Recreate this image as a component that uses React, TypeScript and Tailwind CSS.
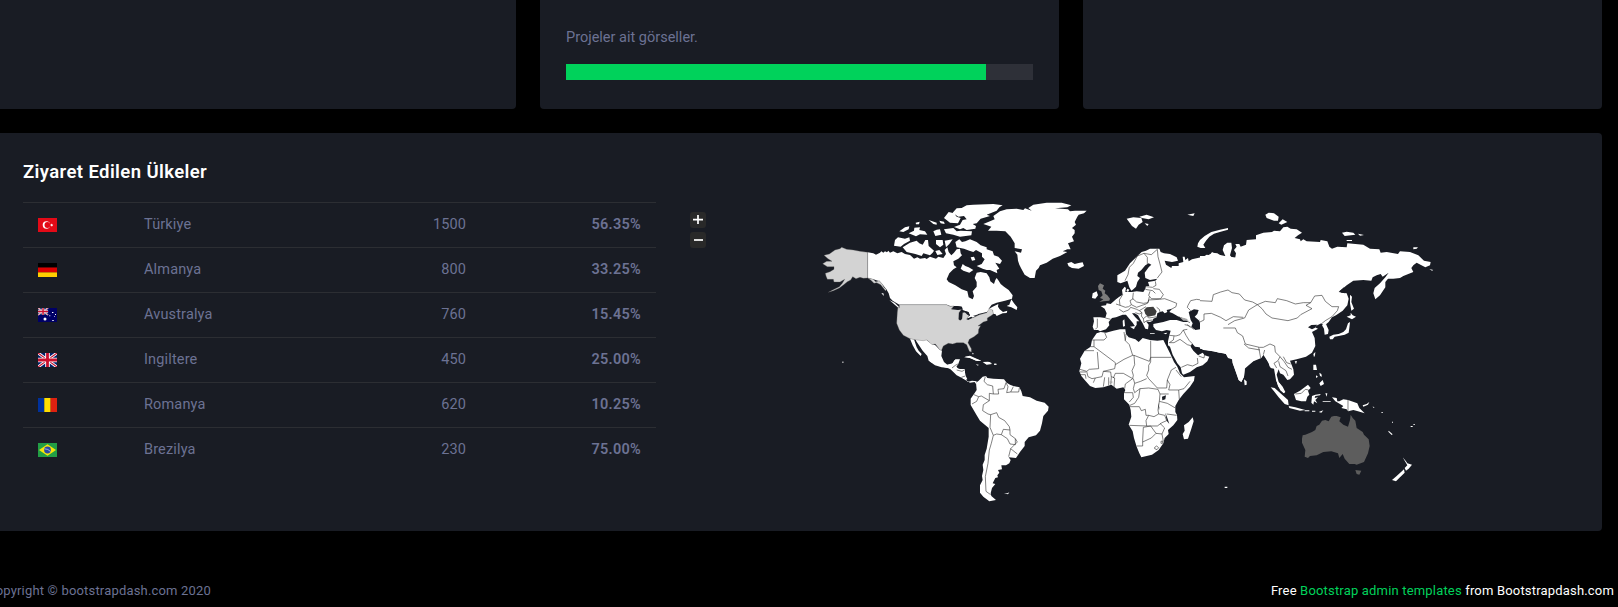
import React from "react";

const rows = [
  { flag: "tr", name: "Türkiye", count: "1500", share: "56.35%" },
  { flag: "de", name: "Almanya", count: "800", share: "33.25%" },
  { flag: "au", name: "Avustralya", count: "760", share: "15.45%" },
  { flag: "gb", name: "Ingiltere", count: "450", share: "25.00%" },
  { flag: "ro", name: "Romanya", count: "620", share: "10.25%" },
  { flag: "br", name: "Brezilya", count: "230", share: "75.00%" },
];

function UnionJack() {
  return (
    <>
      <path fill="#012169" d="M0 0h19v14H0z" />
      <path stroke="#fff" strokeWidth="3" d="M0 0l19 14M19 0L0 14" />
      <path stroke="#c8102e" strokeWidth="1.1" d="M0 0l19 14M19 0L0 14" />
      <path stroke="#fff" strokeWidth="4.6" d="M9.5 0v14M0 7h19" />
      <path stroke="#c8102e" strokeWidth="2.8" d="M9.5 0v14M0 7h19" />
    </>
  );
}

function Flag({ code }: { code: string }) {
  return (
    <svg viewBox="0 0 19 14" className="block h-[14px] w-[19px]" fill="none">
      {code === "tr" && (
        <>
          <path fill="#e30a17" d="M0 0h19v14H0z" />
          <circle cx="8.4" cy="7" r="3.7" fill="#fff" />
          <circle cx="9.4" cy="7" r="2.9" fill="#e30a17" />
          <path fill="#fff" d="M11.8 7l1.2-.5.2-1.1.8 1 1.2-.1-.7.8.5 1.1-1.2-.4-.8.9v-1.2z" />
        </>
      )}
      {code === "de" && (
        <>
          <path fill="#000" d="M0 0h19v4.7H0z" />
          <path fill="#d00" d="M0 4.5h19v5H0z" />
          <path fill="#ffce00" d="M0 9.4h19V14H0z" />
        </>
      )}
      {code === "au" && (
        <>
          <path fill="#006" d="M0 0h19v14H0z" />
          <g transform="scale(.53 .5)">
            <UnionJack />
          </g>
          <circle cx="7" cy="11" r="1.5" fill="#fff" />
          <path fill="#fff" d="M14 4h1.4v1H14zM11.3 7.3h1v1h-1zM17 6h1v1h-1zM14.3 12h1.4v1h-1.4zM16.2 8.3h.8v.8h-.8z" />
        </>
      )}
      {code === "gb" && <UnionJack />}
      {code === "ro" && (
        <>
          <path fill="#00319c" d="M0 0h6.4v14H0z" />
          <path fill="#ffde00" d="M6.3 0h6.4v14H6.3z" />
          <path fill="#de2110" d="M12.6 0H19v14h-6.4z" />
        </>
      )}
      {code === "br" && (
        <>
          <path fill="#229e45" d="M0 0h19v14H0z" />
          <path fill="#f8e509" d="M9.5 1.2L18 7l-8.5 5.8L1 7z" />
          <circle cx="9.5" cy="7" r="3.4" fill="#2b49a3" />
          <path stroke="#fff" strokeOpacity=".7" strokeWidth=".8" d="M6.5 5.8q3.5 0 6 2.6" />
        </>
      )}
    </svg>
  );
}

function WorldMap() {
  return (
    <svg viewBox="706 190 896 340" className="mt-[57px] block h-[340px] w-[896px]" fill="#fff">
      {/* North America */}
      <g transform="translate(810 190) scale(.33333)">
        <path d="M173 187L190 190 198 194 210 188 214 184 220 188 225 184 231 187 235 182 240 188 250 184 262 190 275 186 285 192 300 195 306 200 312 206 322 202 330 206 345 204 350 207 360 200 378 206 385 200 400 204 408 192 404 180 412 172 416 186 424 196 432 188 440 178 450 176 452 190 456 196 445 206 430 214 432 226 440 232 430 238 418 250 410 268 416 276 436 286 455 298 472 304 476 322 488 328 492 318 488 304 500 290 500 276 494 264 500 248 512 246 530 250 538 262 541 274 552 282 556 270 560 264 566 272 572 282 582 290 596 300 608 316 606 326 585 332 560 338 545 344 535 358 548 350 565 342 564 350 569 358 579 366 592 362 590 369 578 370 560 378 556 372 550 372 548 360 530 366 505 372 490 382 470 392 472 382 480 376 474 366 458 360 456 350 440 348 420 348 410 344 268 344 248 332 240 324 236 310 229 298 218 284 208 274 190 268 173 264Z" />
        <path d="M318 450L350 450 366 462 376 466 388 478 396 482 394 498 402 516 412 524 428 520 436 508 450 508 444 524 438 530 448 538 464 538 466 555 472 568 460 566 445 552 430 542 416 534 395 532 375 526 356 512 352 498 338 482 326 464 318 452ZM300 446L312 448 320 472 326 482 335 492 332 498 318 484 308 466Z" />
        <path d="M255 150L264 142 285 146 298 142 300 152 282 162 272 170 252 167ZM278 172L300 158 320 152 328 160 338 164 346 150 354 150 356 168 372 182 368 188 360 196 340 190 335 198 316 192 290 186ZM268 124L285 112 298 109 296 118 280 126ZM296 130L312 122 313 113 330 112 328 120 345 124 352 134 330 133 318 139ZM317 98L329 95 327 103 318 103ZM356 90L380 98 380 104 370 102ZM370 124L380 119 390 118 394 134 376 138ZM378 150L398 150 400 164 390 172 378 162ZM404 152L428 148 418 162 408 172ZM402 118L430 114 440 124 452 122 486 124 484 136 450 140 430 134 408 130ZM388 92L402 95 404 102 392 100ZM376 183L388 180 398 192 382 195Z" />
        <path d="M428 68L440 55 455 54 470 46 490 44 550 42 578 46 568 52 560 62 530 74 540 78 512 86 500 100 488 102 498 108 496 116 470 120 460 114 450 118 432 111 450 104 458 90 470 88 462 78 445 80ZM402 84L416 66 432 70 440 80 452 84 444 100 420 98ZM436 156L448 148 456 156 466 154 480 148 500 156 512 166 530 172 530 178 548 184 552 196 565 200 576 212 570 222 556 218 568 236 560 240 562 250 540 240 530 240 518 236 500 228 515 222 524 208 516 200 516 190 498 180 490 186 478 182 462 176 440 172ZM452 236L458 222 466 228 476 232 490 240 478 248 460 242ZM482 202l10-2 4 10-10 2zM590 348L598 344 604 328 612 340 622 352 620 360 604 352ZM238 330L254 338 268 352 268 356 256 346ZM214 310h6l2 8zM462 502L478 499 500 508 514 512 498 512 480 504ZM518 516L535 515 546 522 530 524ZM552 521h6v3h-6zM497 523l9 1-2 3zM486 488l5 2-2 4zM494 488l4 6z" />
        <g fill="#d3d3d3" stroke="#555" strokeWidth=".9">
          <path d="M58 192L75 180 90 176 95 172 110 178 130 180 150 184 173 187 173 264 160 265 150 262 138 266 128 260 122 270 112 275 100 285 88 294 70 302 55 307 68 300 88 290 97 280 104 268 90 276 72 276 70 268 52 268 48 258 46 250 60 245 72 238 72 230 52 230 38 221 50 214 66 214 54 206 42 196Z" />
          <path d="M173 264L190 268 197 275 208 272 218 284 222 292 229 298 227 303 212 284 200 278 192 280 182 270Z" />
          <path d="M268 344L410 344 420 349 432 348 424 357 435 355 445 358 455 357 447 368 446 388 452 391 456 386 458 368 468 366 478 374 470 388 492 382 508 374 530 368 538 356 548 360 550 372 543 377 532 384 532 392 520 396 504 408 512 407 506 418 505 430 492 440 478 448 474 458 484 476 484 486 478 484 470 464 460 458 440 458 428 462 415 460 400 468 394 482 388 478 376 462 366 464 360 458 350 450 340 452 318 450 300 446 280 436 268 420 260 400 262 366 264 352 268 354Z" />
          <path stroke="none" d="M96 515h5v3h-5z" />
        </g>
        <path fill="#191c24" d="M424 358L440 348 454 350 458 358 444 360ZM448 370L456 364 456 386 448 391ZM460 362L476 366 480 378 472 374ZM470 386L484 380 488 383 474 390ZM488 378L500 374 500 377Z" />
      </g>
      {/* Central and South America */}
      <g transform="translate(930 350) scale(.33333)">
        <path d="M0 15L0 35 30 48 60 56 80 76 96 84 112 94 120 98 134 96 138 102 140 94 126 92 112 96 106 78 104 58 82 56 78 46 84 38 86 29 74 30 66 42 46 46 36 34Z" />
        <path d="M138 98L146 92 158 80 168 78 172 84 190 86 222 88 230 98 240 104 250 108 268 112 274 124 278 138 300 142 320 152 344 158 356 170 354 182 340 198 336 220 330 242 318 256 296 262 284 276 284 288 270 306 258 324 236 322 242 330 238 340 228 346 214 346 216 358 204 360 208 368 202 376 204 382 196 384 188 400 196 402 186 414 182 430 184 438 198 450 178 454 160 440 150 428 150 406 158 390 156 378 160 360 158 344 164 330 164 315 170 296 176 260 176 234 150 212 140 196 122 165 122 146 132 132 140 120ZM104 20L120 17 140 26 154 32 142 33 120 24ZM162 38L178 36 186 40 170 43ZM193 41h7v3h-7zM222 430h10l6-3-4 6z" />
      </g>
      {/* Greenland and North Atlantic */}
      <g transform="translate(980 190) scale(.33333)">
        <path d="M10 102L30 94 44 88 40 78 60 64 80 58 110 56 130 60 135 55 155 62 145 54 160 44 200 38 245 38 274 46 262 52 225 55 264 58 270 64 285 62 320 62 312 70 296 74 292 80 284 96 288 104 276 114 284 120 284 130 276 140 282 154 264 160 272 178 262 178 248 184 262 186 240 198 218 206 200 218 180 226 176 234 168 242 164 264 150 264 134 254 124 236 118 224 114 212 112 194 104 184 123 188 126 178 104 174 104 160 92 140 76 124 50 122 24 122 34 110ZM262 220L266 229 276 234 296 236 312 228 308 217 296 219 284 222 274 216ZM440 86L460 82 484 84 488 96 476 104 468 116 456 108ZM478 80L500 74 522 82 506 88 486 84ZM494 100l12 2-4 6zM622 74L644 70 640 78Z" />
        <path d="M338 310L350 304 354 316 346 326 336 324Z" />
      </g>
      {/* Europe, Middle East and Africa */}
      <g transform="translate(1070 230) scale(.33333)">
        <path d="M142 136L155 128 165 122 180 100 200 80 215 66 228 62 240 56 268 56 272 66 282 70 300 72 320 82 324 92 306 96 284 92 288 104 304 114 306 108 326 108 326 100 340 96 338 80 344 80 346 90 354 84 356 94 366 88 400 80 410 74 420 76 426 66 436 72 465 78 620 100 620 372 600 412 596 398 580 374 572 384 566 376 560 386 545 396 525 412 522 440 514 456 506 450 498 425 488 400 486 388 474 384 468 372 458 368 448 368 432 364 400 360 388 352 375 350 366 340 362 350 370 362 384 376 398 368 404 376 418 380 412 394 398 406 380 412 360 426 340 434 336 430 332 412 322 400 308 374 300 350 294 346 294 334 298 316 302 302 290 300 276 304 258 300 250 290 250 282 280 276 300 270 320 270 340 276 354 276 344 266 326 260 308 250 298 246 306 236 290 240 292 246 284 250 278 244 270 246 262 250 260 262 250 266 248 272 240 276 228 274 236 284 234 298 226 296 218 280 212 270 204 256 194 250 186 250 196 262 208 274 200 274 200 284 196 290 188 278 176 264 168 254 158 254 148 258 138 262 126 264 116 276 118 286 108 298 90 304 84 300 72 300 68 290 72 274 70 262 90 262 106 264 110 250 104 236 92 228 108 226 110 220 122 222 138 208 148 200 158 194 156 180 164 170 168 174 166 186 186 186 200 184 220 186 226 176 228 168 238 168 234 156 256 152 262 146 240 150 226 144 224 128 236 112 244 104 236 100 226 106 214 120 204 128 202 138 210 144 202 156 198 170 190 178 184 182 178 172 172 152 162 156 152 160 142 156Z" />
        <path d="M66 330L80 310 92 306 108 308 130 302 150 298 166 298 168 312 176 322 196 328 206 336 218 324 240 330 262 332 280 330 288 346 300 370 312 396 322 410 330 430 342 442 374 438 372 452 360 470 340 492 326 510 316 528 316 546 321 555 322 570 310 586 294 600 296 612 284 624 280 640 266 660 246 674 214 682 208 670 200 650 192 624 188 604 176 584 184 560 182 540 178 524 162 508 162 490 166 480 160 472 140 476 124 464 100 472 76 474 60 468 46 452 34 438 28 424 34 400 30 386 44 362 62 350ZM368 562L371 574 364 596 354 626 342 628 338 612 344 602 342 586 356 576ZM382 50L384 40 390 30 404 18 424 6 450-1 474-6 474-1 452 5 432 11 418 20 408 32 400 44 406 54 392 54ZM522 448l8 6 0 10-6 2zM158 272l5-4 2 20-6 2zM180 290l16-2-4 10zM280 310l12-2-4 5zM240 309h14v2h-14zM172 176l6 3-4 7-5-3z" />
        <path fill="#191c24" d="M356 246L372 238 386 240 382 252 374 260 388 272 392 286 390 298 376 300 364 290 368 280 362 270ZM276 500L288 496 286 508 277 511ZM264 518l4 14-1 10zM286 548l6 16 6 18-8-10z" />
        <path fill="none" stroke="#222" strokeWidth="1.7" strokeLinejoin="round" d="M165 152L174 134 178 112 190 100 202 78 222 70 244 74 262 58M232 102L232 82 222 70M262 58L264 80 270 102 276 126 262 144M256 154L258 166 248 172 228 170M226 178L248 182 256 190M250 176L268 178 280 194 272 206 244 206 236 196 240 184M190 188L188 206 200 216 220 220 234 218 238 200M158 194L148 210 150 226 166 232 176 230 184 224 180 212 190 206M184 224L200 232 216 226 228 222 234 218M234 218L236 210 268 208 284 206 300 212 320 220 318 230 304 238M148 238L160 246 176 240 182 232M138 222L150 226M182 232L200 238 208 242 218 236 228 230M196 248L208 252 216 248 208 242M216 248L214 258 220 266 230 258 236 264 250 262 260 260M220 266L222 278 230 272 248 270M82 266L82 292 76 298M106 264L122 268M260 232L268 238 270 246M326 260L348 272 360 278M344 284L354 286 360 292M66 330L102 330 110 322 104 308M62 350L72 350 72 330M72 350L136 398 136 404 162 388 188 376 178 344 166 332 162 306M82 366L86 416 58 418 50 424 30 418M44 362L72 362M168 312L166 332M242 332L242 382 304 382M242 382L238 394 192 376 188 376M242 382L242 396 236 406 236 420 230 436 236 446 M192 376L194 404 186 422 190 436 188 446 160 430 136 430 130 444M136 404L134 416 100 424 96 440 76 444 70 458M100 424L122 426 124 442 122 464M50 424L54 440 66 446 76 444M30 426H48M30 434L46 434 48 446M104 442L100 470M116 442V466M124 440L134 444 132 472M188 446L166 462 164 476M190 446L194 460 212 454 230 446 M194 460L190 476 194 488 210 476 236 474 264 478 M236 446L262 474 290 474 292 450 304 420 318 412M292 450L300 464 296 480 326 480 328 508M318 420L334 440M326 480L342 476 360 454M264 478L270 492 268 514 292 520 316 534M270 492H296M162 488H188L190 502 178 516M210 476L206 502 194 520 180 526M180 530L208 530 214 542 226 538 228 556 236 556M268 514L264 540 266 552 252 560 236 556 228 572 230 588 178 586M266 552L284 556 290 572 276 578 262 588 230 588M220 592L218 630 218 648 200 648M220 592L242 588 258 610 244 624 218 636M258 610L276 612 284 594 270 580M290 552L320 556M276 612L280 634M254 652l6-4 6 5-5 6-7-3zM273 634l5-1 0 7-5 0zM298 316L318 318 330 314 340 300 352 298M340 300L348 316 358 332 366 340M298 338L312 338 330 328 352 344 366 348M312 318L310 330 298 338M352 284L372 298M392 298L414 296 424 308 426 326 424 344 432 350 430 364M424 308L442 310 472 300 494 296M426 340L448 342 468 330 478 312 494 308 498 300M470 370L480 356 470 350 486 338 496 318 512 314M390 268L402 250 426 248 446 262 464 270M390 270L412 272 432 280 446 296 470 304 496 306M354 226L352 232 362 242M354 226L362 212 380 208 408 212 432 206 428 190 454 186 474 180 490 186 510 188 530 208 556 220 564 228M564 228L540 246 530 262 506 268 474 270 472 282 494 290 496 298 522 320 526 336 544 342 566 350 580 350M522 338L540 354 564 358M566 350L568 376M334 412L352 404 368 408 384 400 382 384M386 378L402 384 404 372" />
        <path fill="#3c3c3c" d="M222 240L230 232 250 230 260 244 256 256 234 260 226 252Z" />
        <path fill="#aaa" d="M328 260L350 266 356 272 340 272ZM119 454h8v6h-8z" />
      </g>
      <path
        transform="translate(980 190) scale(.33333)"
        fill="#7b7b7b"
        d="M354 288L360 280 372 286 368 296 376 302 374 310 382 316 390 326 388 332 370 334 358 336 370 328 360 324 368 316 364 304 356 300Z"
      />
      {/* Asia */}
      <g transform="translate(1200 200) scale(.33333)">
        <path d="M0 168L20 168 38 158 52 160 64 168 76 168 68 150 72 136 82 128 94 128 96 144 90 166 98 176 90 184 96 188 105 176 108 160 102 150 110 140 106 132 118 132 122 140 138 134 140 120 168 118 168 106 190 98 216 96 222 92 240 94 250 82 262 80 272 86 290 88 306 98 294 106 284 114 300 118 302 124 310 118 320 124 360 126 362 120 382 124 388 140 396 146 412 140 440 142 442 130 490 134 510 146 538 148 542 158 560 156 594 162 600 154 630 156 655 166 672 182 692 186 690 196 676 202 650 188 640 196 634 204 640 216 610 228 600 234 580 236 564 236 556 246 556 262 540 286 526 298 520 280 524 264 540 250 556 232 566 218 548 230 542 222 530 226 518 232 514 242 490 240 460 242 440 256 416 276 440 280 446 296 442 316 428 332 408 346 396 352 386 366 372 378 364 370 352 376 345 382 354 386 336 396 344 414 346 438 336 458 318 470 290 478 270 482 280 508 282 524 270 538 262 540 250 524 240 520 236 508 230 524 236 546 248 560 256 576 250 580 236 560 228 540 222 506 212 504 206 490 196 470 190 464 184 474 160 484 134 506 132 530 124 546 116 540 106 512 98 488 98 476 84 472 78 462 60 458 0 446Z" />
        <path d="M366 376L378 372 386 390 384 402 374 404 372 386ZM390 418L388 410 400 404 416 402 430 396 438 388 444 370 450 366 448 384 446 398 434 404 416 408 404 410 398 418ZM440 350L452 346 452 338 458 346 468 350 456 358ZM450 284L456 290 454 306 462 326 454 332 450 310ZM340 462L346 456 345 466 342 472ZM284 484l7-1-3 10zM196 44L206 38 222 40 236 50 234 62 222 62 200 54ZM236 70L248 58 262 66 244 74ZM426 98L440 95 460 98 466 104 434 108ZM474 101L492 105 480 107ZM640 142l14 0-4 4-10 2zM440 120h16v3h-16zM688 207l12 3-4 2z" />
        <path fill="#191c24" d="M324 382L334 375 352 374 344 384 336 388ZM418 274l14-12 4 18-12-2z" />
        <path fill="none" stroke="#222" strokeWidth="1.7" strokeLinejoin="round" d="M0 302L36 304 40 284 62 276 84 270 96 278 118 282 134 300 158 306 172 314 186 326 198 342 216 354 264 362 292 354 302 344 336 326 318 316 332 308 310 308 286 312 260 302 232 296 226 308 196 304 172 314M332 308L344 288 366 286 376 304 396 320 416 320 412 332 396 350 376 362 366 370M172 314L146 330 134 354 104 362 84 374M0 366L12 360 12 342 34 340 62 352 78 362 100 350 130 352M70 384L106 384 112 398 128 408 136 432 178 442 190 442M132 432L146 444 180 450M176 442L182 474M190 442L210 432 224 438 226 456 240 470 234 482 222 490 230 504M240 470L252 484 264 502 276 508M250 470L260 488 272 492M236 484L240 500 258 512 264 528M194 450L190 464" />
      </g>
      {/* Southeast Asia and Oceania */}
      <g transform="translate(1220 340) scale(.33333)">
        <path d="M152 142L164 144 188 166 204 180 206 196 194 192 176 172 162 154ZM168 118L180 132 192 152 194 160 182 152 174 138ZM206 198L226 202 242 206 256 210 240 212 208 204ZM222 162L240 152 256 140 264 134 272 144 264 152 268 164 262 170 258 184 244 184 228 180ZM276 168L286 164 302 162 300 166 286 168 284 174 294 172 286 180 292 190 282 184 280 194 274 188ZM336 172L350 174 352 184 358 184 370 178 384 180 412 190 418 204 434 220 414 214 400 210 384 214 380 208 364 204 370 198 346 184ZM280 74L288 74 291 90 280 90ZM284 92l7 4M298 98l6 4 2 8-6-2zM288 106l6 4-6 4zM298 130L308 120 312 132 302 138ZM316 160l6 0-2 10zM254 211h14v3h-14zM276 212h10v3h-10zM296 216l14-5-6 7zM308 183h24v2h-24zM428 196L440 192 448 186 444 194 430 200ZM458 199l6 4-4 0zM484 216h5v2h-5zM506 272l12 11-3 2-10-10zM516 245h3v3h-3zM572 258h6v3h-6zM580 252h5v2h-5zM14 440h8v4h-8zM548 352L558 364 562 370 576 374 566 386 558 392 554 384 562 376ZM552 388L554 398 540 412 528 424 516 420 530 408Z" />
        <path fill="#5d5d5d" d="M246 296L248 286 256 284 276 276 286 270 290 258 298 254 306 242 316 240 326 244 334 230 342 228 350 228 362 232 358 244 370 254 384 260 390 240 392 224 398 234 406 242 410 264 428 276 432 284 446 298 449 318 444 340 432 366 410 374 404 372 388 372 374 356 368 342 358 354 354 340 334 334 310 336 290 346 270 348 264 354 254 350 256 330 246 308ZM406 390L424 392 418 404 410 402Z" />
        <path fill="none" stroke="#222" strokeWidth="1.7" d="M384 180V213M226 162L244 160 256 148 266 150" />
      </g>
      <path
        transform="translate(930 350) scale(.33333)"
        fill="none"
        stroke="#222"
        strokeWidth="1.7"
        strokeLinejoin="round"
        d="M166 80L162 94 172 104 188 108 190 132 178 130 178 152 154 138 146 140 132 134M146 140L140 154 126 162M178 152L160 164 158 182 174 192 182 194 180 232 190 256 184 280 178 300 174 340 166 380 168 424 182 434M190 132L206 132 204 118 222 116 228 98M228 98L234 110 230 128 242 126 250 110M242 126L266 126 268 114M182 194L200 188 206 202 224 212 238 230 240 240 220 238 214 254 200 252 190 256M240 240L240 254 256 266 256 284 240 282 232 266 214 254M256 266L262 276 242 296 236 320M242 296L262 312M66 54L76 46 84 42M80 60L96 64 104 60M94 82L106 78"
      />
    </svg>
  );
}

export default function App() {
  return (
    <div className="flex h-[607px] w-[1618px] flex-col overflow-hidden bg-black font-[Roboto,sans-serif] text-[#6c7293]">
      <div className="flex h-[109px] shrink-0 gap-6">
        <div className="w-[516px] shrink-0 rounded-br bg-[#191c24]" />
        <div className="w-[519px] shrink-0 rounded-b bg-[#191c24] px-[26px] pt-[27px]">
          <p className="text-[14.5px] leading-[22px]">Projeler ait görseller.</p>
          <div className="mt-[15px] h-4 bg-[#2e3038]">
            <div className="h-full w-[90%] bg-[#00d25b]" />
          </div>
        </div>
        <div className="w-[519px] shrink-0 rounded-b bg-[#191c24]" />
      </div>

      <section className="mt-6 flex h-[398px] w-[1602px] shrink-0 rounded-r bg-[#191c24]">
        <div className="w-[656px] shrink-0 pl-[23px] pt-[27px]">
          <h4 className="text-[18.5px] font-semibold leading-6 tracking-[0.4px] text-white">Ziyaret Edilen Ülkeler</h4>
          <div className="mt-[18px]">
            {rows.map((row) => (
              <div key={row.flag} className="flex h-[45px] items-center border-t border-[#2c2e33] px-[15px] text-[14.5px] leading-[14px]">
                <div className="w-[106px]">
                  <Flag code={row.flag} />
                </div>
                <div className="w-[160px] tracking-[0.15px]">{row.name}</div>
                <div className="w-[162px] text-right tracking-[0.1px]">{row.count}</div>
                <div className="flex-1 text-right font-semibold tracking-[0.25px]">{row.share}</div>
              </div>
            ))}
          </div>
        </div>
        <div className="ml-[34px] mt-[79px] flex w-4 shrink-0 flex-col gap-1 text-white">
          {["M3 7.6h10M8 3v9", "M4 8h9"].map((d) => (
            <button key={d} className="block h-4 w-4 rounded-[3px] bg-[#292929]">
              <svg viewBox="0 0 16 16" className="block h-4 w-4" stroke="currentColor" strokeWidth="1.7">
                <path d={d} />
              </svg>
            </button>
          ))}
        </div>
        <WorldMap />
      </section>

      <footer className="mt-[50px] flex justify-between pr-1 text-[13px] leading-5 tracking-[0.18px]">
        <div className="flex w-[211px] justify-end overflow-hidden whitespace-nowrap">
          <span>Copyright © bootstrapdash.com 2020</span>
        </div>
        <div className="whitespace-nowrap text-white">
          Free <a className="text-[#00d25b]">Bootstrap admin templates</a> from Bootstrapdash.com
        </div>
      </footer>
    </div>
  );
}
